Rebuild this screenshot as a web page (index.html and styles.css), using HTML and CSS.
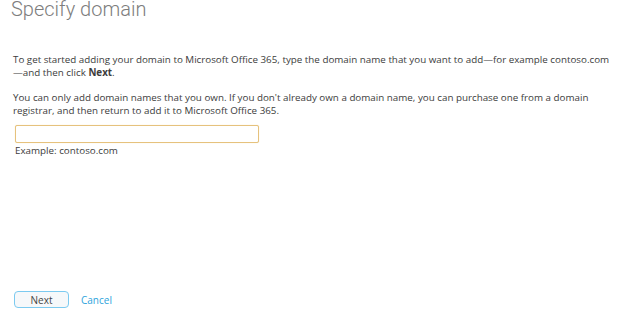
FILE: index.html
```html
<!DOCTYPE html>
<html lang="en">
<head>
  <meta charset="UTF-8" />
  <title>Specify domain</title>
  <link rel="stylesheet" href="styles.css">
</head>
<body>

<div class="page">
  <h1 class="title">Specify domain</h1>

  <p class="intro">To get started adding your domain to Microsoft Office 365, type the domain name that you want to add—for example contoso.com<br>—and then click <b>Next</b>.</p>

  <p class="intro">You can only add domain names that you own. If you don't already own a domain name, you can purchase one from a domain<br>registrar, and then return to add it to Microsoft Office 365.</p>

  <div class="field">
    <input class="domain-input" type="text">
    <div class="hint">Example: contoso.com</div>
  </div>

  <div class="actions">
    <button class="next">Next</button>
    <a class="cancel" href="#">Cancel</a>
  </div>
</div>

</body>
</html>
```

FILE: styles.css
```css
* {
  box-sizing: border-box;
}

body {
  margin: 0;
  background: #fff;
  font-family: 'Open Sans', sans-serif;
  color: #3c3c3c;
}

.page {
  height: 100vh;
  display: flex;
  flex-direction: column;
  padding: 0 0 14px 13px;
}

.title {
  margin: 0 0 0 -2px;
  font-family: Roboto, sans-serif;
  font-weight: 300;
  font-size: 20px;
  line-height: 19px;
  color: #7d7d7d;
}

.intro {
  margin: 34px 0 0;
  font-size: 9.8px;
  line-height: 13px;
}

.intro + .intro {
  margin-top: 12px;
}

.intro b {
  font-weight: 700;
}

.field {
  margin-top: 8px;
  padding-left: 2px;
}

.domain-input {
  display: block;
  width: 244px;
  height: 18px;
  margin: 0;
  border: 1px solid #e6c27d;
  border-radius: 2px;
  box-shadow: 0 0 1px #f0d9a8;
  outline: none;
}

.hint {
  margin-top: 1px;
  font-size: 9.8px;
  line-height: 13px;
}

.actions {
  margin-top: auto;
  display: flex;
  align-items: center;
  gap: 12px;
  padding-left: 1px;
}

.next {
  width: 55px;
  height: 17px;
  padding: 0;
  border: 1px solid #7ccaf0;
  border-radius: 4px;
  background: #f6f8fa;
  font-family: 'Open Sans', sans-serif;
  font-size: 10px;
  color: #444;
}

.cancel {
  font-size: 10px;
  color: #2ea3dc;
  text-decoration: none;
}
```
